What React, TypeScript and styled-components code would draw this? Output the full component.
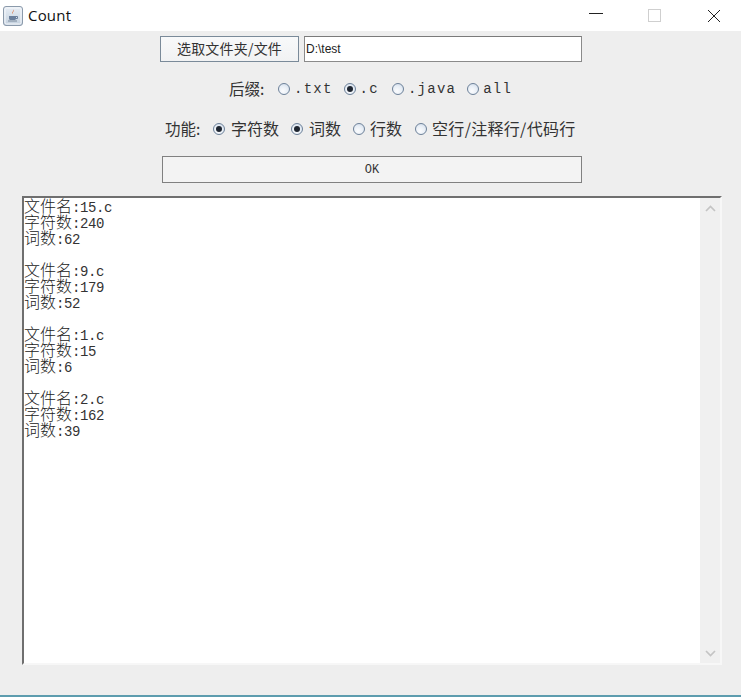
import React from "react";
import styled, { createGlobalStyle } from "styled-components";

const Global = createGlobalStyle`
  html, body { margin: 0; padding: 0; background: #eeeeee; }
  * { box-sizing: border-box; }
  body { font-family: "Noto Sans CJK SC", "Liberation Sans", sans-serif; }
`;

const Win = styled.div`
  width: 741px; height: 697px; background: #eeeeee; display: flex; flex-direction: column; overflow: hidden;
`;
const TitleBar = styled.div`
  height: 31px; background: #fff; display: flex; align-items: center; flex: none; padding-left: 3px;
`;
const TitleText = styled.span`
  font: 15px "Open Sans", "Liberation Sans", sans-serif; color: #111; margin-left: 5px; letter-spacing: 0.2px; flex: 1; line-height: 30px; padding-bottom: 2px;
`;
const WinButtons = styled.div`
  display: flex; align-items: center; gap: 45px; padding-right: 20px; height: 31px;
`;
const MinIcon = styled.svg`
  margin-bottom: 4px;
`;
const Body = styled.div`
  flex: 1; display: flex; flex-direction: column; min-height: 0;
`;
const TopRow = styled.div`
  display: flex; gap: 5px; margin: 5px 0 0 160px; height: 26px;
`;
const Btn = styled.div<{ $w: number }>`
  width: ${(p) => p.$w}px; height: 100%; background: linear-gradient(#f8f9fa, #f1f2f3);
  border: 1px solid #7a8a99; display: flex; align-items: center; justify-content: center;
  font-size: 14px; color: #333; letter-spacing: 0.2px; padding-bottom: 3px;
`;
const Field = styled.div`
  width: 278px; height: 100%; background: #fff; border: 1px solid #8a8a8a; border-top-color: #7a7a7a;
  display: flex; align-items: center; padding-left: 1px;
  font: 12px "Liberation Sans", sans-serif; color: #222; padding-bottom: 1px;
`;
const RadioRow = styled.div<{ $top: number; $left: number }>`
  display: flex; align-items: center; height: 24px; margin: ${(p) => p.$top}px 0 0 ${(p) => p.$left}px;
  font-size: 16px; line-height: 24px; color: #333;
`;
const Label = styled.span<{ $w: number }>`
  width: ${(p) => p.$w}px; flex: none; white-space: nowrap; padding-bottom: 2px; font-size: 15.5px;
`;
const Dot = styled.span<{ $on?: boolean }>`
  width: 12px; height: 12px; border-radius: 50%; flex: none; position: relative;
  border: 1px solid #6d8199;
  background: radial-gradient(circle at 40% 70%, #fbfcfe 0, #e9eff6 50%, #c9d6e6 100%);
  &::after {
    content: ""; display: ${(p) => (p.$on ? "block" : "none")}; position: absolute; left: 2px; top: 2px;
    width: 6px; height: 6px; border-radius: 50%; background: #1e2530;
  }
`;
const Opt = styled.span<{ $ml: number; $mr: number; $ls?: number }>`
  margin-left: ${(p) => p.$ml}px; margin-right: ${(p) => p.$mr}px; white-space: nowrap;
  letter-spacing: ${(p) => p.$ls ?? 0}px; padding-bottom: 2px;
`;
const MonoOpt = styled.span<{ $ml: number; $mr: number }>`
  margin-left: ${(p) => p.$ml}px; margin-right: ${(p) => p.$mr}px; white-space: nowrap;
  font: 14px "Liberation Mono", monospace; letter-spacing: 1.25px; color: #333;
`;
const OkRow = styled.div`
  margin: 15px 0 0 162px; width: 420px; height: 27px; background: #f3f3f3; border: 1px solid #808080;
  display: flex; align-items: center; justify-content: center;
  font: 12px "Liberation Mono", monospace; color: #333;
`;
const AreaFrame = styled.div`
  margin: 13px 0 0 22px; width: 700px; height: 469px; display: flex;
  border-top: 2px solid #6f6f6f; border-left: 2px solid #6f6f6f;
  border-right: 2px solid #f7f7f7; border-bottom: 2px solid #f7f7f7; background: #fff;
`;
const Text = styled.div`
  flex: 1; margin-top: -1px; color: #222; font-size: 16px; line-height: 16px; font-weight: 300;
`;
const Line = styled.div`
  height: 16px; white-space: pre; overflow: visible;
`;
const Latin = styled.span`
  font: 14px "Liberation Mono", monospace; letter-spacing: -0.4px; line-height: 16px; color: #333;
`;
const Track = styled.div`
  width: 20px; background: #f0f0f0; display: flex; flex-direction: column; justify-content: space-between;
  align-items: center; padding: 7px 0 6px;
`;
const Bottom = styled.div`
  height: 2px; flex: none; margin-top: 30px; background: #5d9cae;
`;

const JavaIcon = () => (
  <svg width="20" height="20" viewBox="0 0 20 20">
    <defs>
      <linearGradient id="g" x1="0" y1="0" x2="0" y2="1">
        <stop offset="0" stopColor="#e8eef5" />
        <stop offset="1" stopColor="#c3d0de" />
      </linearGradient>
    </defs>
    <rect x="0.5" y="0.5" width="19" height="19" rx="2.5" fill="url(#g)" stroke="#8b9aab" />
    <rect x="2" y="2" width="16" height="16" rx="1.5" fill="none" stroke="#f6f8fb" />
    <path d="M10.5 3.5c1.5 1.5-1.5 2.5-.5 4.5-2-1.5 1-3 .5-4.5z" fill="#d9622b" />
    <path d="M6 10h7v2.5c0 1-1 1.5-2 1.5H8c-1 0-2-.5-2-1.5z" fill="#6a7f9c" />
    <path d="M13 10.5h1.5v2H13" fill="none" stroke="#6a7f9c" />
    <path d="M5 15h9" stroke="#7a8a9c" />
  </svg>
);

const Chevron = ({ up }: { up?: boolean }) => (
  <svg width="11" height="7" viewBox="0 0 11 7">
    <path d={up ? "M1 6l4.5-4.5L10 6" : "M1 1l4.5 4.5L10 1"} fill="none" stroke="#c4c4c4" strokeWidth="1.7" />
  </svg>
);

const results = [
  ["15.c", "240", "62"],
  ["9.c", "179", "52"],
  ["1.c", "15", "6"],
  ["2.c", "162", "39"],
];

export default function App() {
  return (
    <Win>
      <Global />
      <TitleBar>
        <JavaIcon />
        <TitleText>Count</TitleText>
        <WinButtons>
          <MinIcon width="14" height="14" viewBox="0 0 14 14">
            <path d="M0 6.5h14" stroke="#222" strokeWidth="1" />
          </MinIcon>
          <svg width="14" height="14" viewBox="0 0 14 14">
            <rect x="0.5" y="0.5" width="12" height="12" fill="none" stroke="#cfcfcf" />
          </svg>
          <svg width="14" height="14" viewBox="0 0 14 14">
            <path d="M1 1l12 12M13 1L1 13" stroke="#222" strokeWidth="1" />
          </svg>
        </WinButtons>
      </TitleBar>
      <Body>
        <TopRow>
          <Btn $w={139}>选取文件夹/文件</Btn>
          <Field>D:\test</Field>
        </TopRow>
        <RadioRow $top={15} $left={229}>
          <Label $w={49}>后缀:</Label>
          <Dot />
          <MonoOpt $ml={4} $mr={11}>.txt</MonoOpt>
          <Dot $on />
          <MonoOpt $ml={4} $mr={13}>.c</MonoOpt>
          <Dot />
          <MonoOpt $ml={4} $mr={11}>.java</MonoOpt>
          <Dot />
          <MonoOpt $ml={4} $mr={0}>all</MonoOpt>
        </RadioRow>
        <RadioRow $top={16} $left={165}>
          <Label $w={48}>功能:</Label>
          <Dot $on />
          <Opt $ml={6} $mr={12}>字符数</Opt>
          <Dot $on />
          <Opt $ml={6} $mr={12}>词数</Opt>
          <Dot />
          <Opt $ml={5} $mr={13}>行数</Opt>
          <Dot />
          <Opt $ml={5} $mr={0} $ls={0.3}>空行/注释行/代码行</Opt>
        </RadioRow>
        <OkRow>OK</OkRow>
        <AreaFrame>
          <Text>
            {results.map((r) => (
              <React.Fragment key={r[0]}>
                <Line>文件名<Latin>:{r[0]}</Latin></Line>
                <Line>字符数<Latin>:{r[1]}</Latin></Line>
                <Line>词数<Latin>:{r[2]}</Latin></Line>
                <Line> </Line>
              </React.Fragment>
            ))}
          </Text>
          <Track>
            <Chevron up />
            <Chevron />
          </Track>
        </AreaFrame>
        <Bottom />
      </Body>
    </Win>
  );
}
